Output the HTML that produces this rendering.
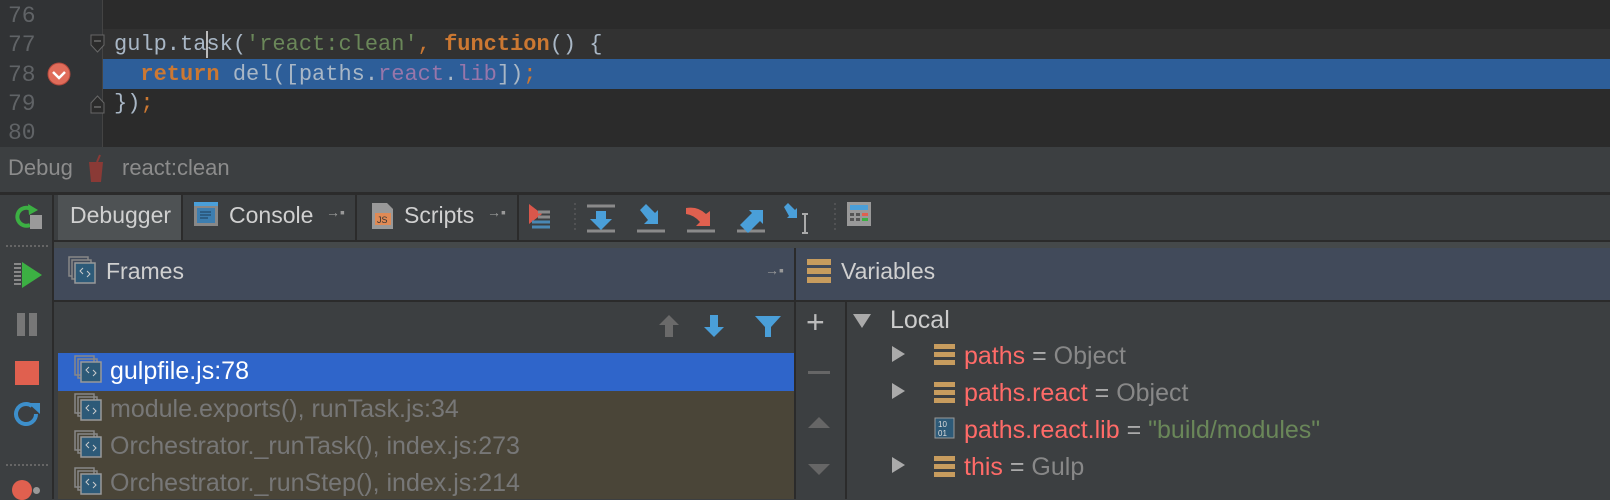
<!DOCTYPE html>
<html><head><meta charset="utf-8"><style>
*{margin:0;padding:0;box-sizing:border-box}
body{width:1610px;height:499px;overflow:hidden;background:#3c3f41;font-family:"Liberation Sans",sans-serif;position:relative}
.a{position:absolute}
.mono{font-family:"Liberation Mono",monospace;font-size:22px;white-space:pre}
.ln{color:#606366;left:8px;font-size:23px}
.ui{font-size:22px;white-space:pre}
.l{font-size:25px;white-space:pre}
</style></head><body>
<!-- editor -->
<div class="a" style="left:0;top:0;width:1610px;height:147px;background:#2b2b2b"></div>
<div class="a" style="left:0;top:29px;width:1610px;height:30px;background:#323232"></div>
<div class="a" style="left:102px;top:0;width:1px;height:147px;background:#444"></div>
<div class="a" style="left:103px;top:59px;width:1507px;height:30px;background:#2d5e99"></div>
<div class="a" style="left:0;top:0;width:102px;height:147px;background:#313335"></div>
<div class="a mono ln" style="top:3px">76</div>
<div class="a mono ln" style="top:32px">77</div>
<div class="a mono ln" style="top:62px">78</div>
<div class="a mono ln" style="top:91px">79</div>
<div class="a mono ln" style="top:120px">80</div>
<svg class="a" style="left:45px;top:60px" width="28" height="28"><circle cx="14" cy="14" r="11" fill="#e06c5a" stroke="#b4493d"/><path d="M8 12l6 6 6-6" stroke="#fff" stroke-width="2.5" fill="none"/></svg>
<svg class="a" style="left:90px;top:34px" width="16" height="22"><path d="M1 1h13v10l-6.5 7L1 11z" fill="#2b2b2b" stroke="#666"/><path d="M4 7h7" stroke="#888"/></svg>
<svg class="a" style="left:90px;top:92px" width="16" height="22"><path d="M1 21h13V11L7.5 4 1 11z" fill="#2b2b2b" stroke="#666"/><path d="M4 15h7" stroke="#888"/></svg>
<div class="a mono" style="left:114px;top:32px;color:#a9b7c6">gulp.task(<span style="color:#6a8759">'react:clean'</span><span style="color:#cc7832">, </span><b style="color:#cc7832">function</b>() {</div>
<div class="a" style="left:206px;top:31px;width:2px;height:27px;background:#bbb"></div>
<div class="a mono" style="left:114px;top:62px;color:#a9b7c6">  <b style="color:#cc7832">return</b> del([paths.<span style="color:#9876aa">react</span>.<span style="color:#9876aa">lib</span>])<span style="color:#cc7832">;</span></div>
<div class="a mono" style="left:114px;top:91px;color:#a9b7c6">})<span style="color:#cc7832">;</span></div>
<!-- debug bar -->
<div class="a" style="left:0;top:147px;width:1610px;height:46px;background:#3c3f41"></div>
<div class="a ui" style="left:8px;top:155px;color:#8c8c8c">Debug</div>
<svg class="a" style="left:84px;top:154px" width="24" height="30"><path d="M5 8h14l-2 20H7z" fill="#8a3a36"/><path d="M13 8l3-7" stroke="#8a3a36" stroke-width="2"/></svg>
<div class="a ui" style="left:122px;top:155px;color:#8c8c8c">react:clean</div>
<div class="a" style="left:0;top:192px;width:1610px;height:3px;background:#2b2b2b"></div>
<!-- left sidebar -->
<div class="a" style="left:52px;top:195px;width:2px;height:304px;background:#2b2b2b"></div>
<svg class="a" style="left:10px;top:200px" width="34" height="32"><path d="M24 12A9 9 0 1 0 20 25" stroke="#3cb043" stroke-width="4" fill="none"/><path d="M18 4l10 6-9 5z" fill="#3cb043"/><rect x="20" y="15" width="12" height="14" fill="#9a9a9a"/></svg>
<div class="a" style="left:6px;top:245px;width:42px;border-top:2px dotted #666"></div>
<svg class="a" style="left:12px;top:260px" width="32" height="30"><path d="M10 2v26l20-13z" fill="#3cb043"/><path d="M2 4h7M2 8h7M2 12h7M2 16h7M2 20h7M2 24h7" stroke="#888" stroke-width="2"/></svg>
<div class="a" style="left:17px;top:313px;width:8px;height:23px;background:#777"></div>
<div class="a" style="left:29px;top:313px;width:8px;height:23px;background:#777"></div>
<div class="a" style="left:15px;top:361px;width:24px;height:24px;background:#e0604f"></div>
<svg class="a" style="left:12px;top:398px" width="32" height="34"><path d="M24 16A10 10 0 1 1 20 8" stroke="#3d8fcb" stroke-width="4" fill="none"/><path d="M16 5h12v11z" fill="#3d8fcb"/></svg>
<div class="a" style="left:6px;top:464px;width:42px;border-top:2px dotted #666"></div>
<div class="a" style="left:12px;top:480px;width:20px;height:20px;border-radius:50%;background:#e0604f"></div>
<div class="a" style="left:33px;top:487px;width:7px;height:7px;border-radius:50%;background:#999"></div>
<!-- tabs -->
<div class="a" style="left:54px;top:195px;width:1556px;height:45px;background:#3c3f41"></div>
<div class="a" style="left:58px;top:195px;width:123px;height:45px;background:#4e5254"></div>
<div class="a" style="left:181px;top:195px;width:2px;height:45px;background:#2b2b2b"></div>
<div class="a" style="left:355px;top:195px;width:2px;height:45px;background:#2b2b2b"></div>
<div class="a" style="left:517px;top:195px;width:2px;height:45px;background:#2b2b2b"></div>
<div class="a ui" style="left:70px;top:202px;color:#d0d0d0;font-size:23px">Debugger</div>
<svg class="a" style="left:193px;top:201px" width="26" height="26"><rect x="1" y="1" width="24" height="24" fill="#888"/><rect x="1" y="1" width="24" height="4" fill="#4a9fd9"/><rect x="4" y="7" width="18" height="15" fill="#3d7eb0"/><path d="M7 11h11M7 14h11M7 17h8" stroke="#1d3c57"/></svg>
<div class="a ui" style="left:229px;top:202px;color:#d0d0d0;font-size:23px">Console</div>
<div class="a" style="left:326px;top:204px;color:#999;font-size:14px">→▪</div>
<svg class="a" style="left:371px;top:202px" width="24" height="28"><path d="M1 1h15l6 6v20H1z" fill="#999"/><rect x="4" y="11" width="16" height="12" fill="#e08a55"/><text x="6" y="21" font-size="9" fill="#333" font-family="Liberation Sans">JS</text></svg>
<div class="a ui" style="left:404px;top:202px;color:#d0d0d0;font-size:23px">Scripts</div>
<div class="a" style="left:487px;top:204px;color:#999;font-size:14px">→▪</div>
<svg class="a" style="left:526px;top:200px" width="360" height="34"><path d="M3 4v20l13-10z" fill="#d9574b"/><path d="M12 12h12M12 17h12M6 22h18M6 27h18" stroke="#8a8a8a" stroke-width="3"/><path d="M6 22h18M6 27h18" stroke="#4a88b4" stroke-width="3"/>
<path d="M49 3v30M309 3v30" stroke="#666" stroke-dasharray="2 3"/>
<path d="M61 6h28M61 31h28" stroke="#8a8a8a" stroke-width="3"/><path d="M70 11h10v8h6l-11 11-11-11h6z" fill="#4a9fd9"/>
<path d="M111 31h28" stroke="#8a8a8a" stroke-width="3"/><path d="M114 10l6-6 9 9 3-3v14h-14l4-4z" fill="#4a9fd9"/>
<path d="M161 31h28" stroke="#8a8a8a" stroke-width="3"/><path d="M160 8q12-2 20 6l4-3v15h-14l4-4q-6-7-14-8z" fill="#e0604f"/>
<path d="M211 31h28" stroke="#8a8a8a" stroke-width="3"/><path d="M214 25l12-12-3-3h14v14l-3-3-12 12z" fill="#4a9fd9"/>
<path d="M258 7l4-4 7 7 2-2v10h-10l2-2z" fill="#4a9fd9"/><path d="M276 14h6M279 14v19M276 33h6" stroke="#aaa" stroke-width="2"/>
</svg>
<svg class="a" style="left:846px;top:201px" width="26" height="26"><rect x="1" y="1" width="24" height="24" fill="#999"/><rect x="4" y="4" width="18" height="5" fill="#4a9fd9"/><rect x="4" y="12" width="4" height="3" fill="#555"/><rect x="10" y="12" width="4" height="3" fill="#555"/><rect x="16" y="12" width="6" height="3" fill="#e0604f"/><rect x="4" y="17" width="4" height="3" fill="#555"/><rect x="10" y="17" width="4" height="3" fill="#555"/><rect x="16" y="17" width="6" height="3" fill="#3cb043"/></svg>
<div class="a" style="left:54px;top:240px;width:1556px;height:8px;background:#45494a;border-top:2px solid #2b2b2b"></div>
<!-- headers -->
<div class="a" style="left:54px;top:248px;width:1556px;height:52px;background:#414a5a"></div>
<div class="a" style="left:794px;top:248px;width:2px;height:251px;background:#2b2b2b"></div>
<div class="a" style="left:54px;top:300px;width:1556px;height:2px;background:#2b2b2b"></div>
<svg class="a" style="left:68px;top:256px" width="30" height="30"><rect x="1" y="1" width="19" height="19" fill="none" stroke="#888" stroke-width="1.5"/><rect x="4" y="4" width="19" height="19" fill="#414a5a" stroke="#888" stroke-width="1.5"/><rect x="7" y="7" width="20" height="20" fill="#2d5a78" stroke="#999" stroke-width="1.5"/><path d="M15 12l-3 3 3 3M19 15l3 3-3 3" stroke="#ccc" fill="none"/></svg>
<div class="a ui" style="left:106px;top:258px;color:#d0d0d0;font-size:23px">Frames</div>
<div class="a" style="left:765px;top:262px;color:#999;font-size:14px">→▪</div>
<svg class="a" style="left:806px;top:258px" width="26" height="26"><rect x="1" y="1" width="24" height="6" fill="#c79c5e"/><rect x="1" y="10" width="24" height="6" fill="#c79c5e"/><rect x="1" y="19" width="24" height="6" fill="#c79c5e"/></svg>
<div class="a ui" style="left:841px;top:258px;color:#d0d0d0;font-size:23px">Variables</div>
<!-- frames -->
<svg class="a" style="left:655px;top:313px" width="130" height="28"><path d="M4 12l10-10 10 10h-6v12h-8V12z" fill="#6a6a6a"/><path d="M55 2h8v12h6L59 24 49 14h6z" fill="#4a9fd9"/><path d="M100 3h26l-10 11v10h-6V14z" fill="#4a9fd9"/></svg>
<div class="a" style="left:58px;top:353px;width:736px;height:38px;background:#2f65ca"></div>
<div class="a" style="left:58px;top:391px;width:736px;height:108px;background:#4a4538"></div>
<div class="a l" style="left:110px;top:357px;color:#fff">gulpfile.js:78</div>
<div class="a l" style="left:110px;top:395px;color:#777">module.exports(), runTask.js:34</div>
<div class="a l" style="left:110px;top:432px;color:#777">Orchestrator._runTask(), index.js:273</div>
<div class="a l" style="left:110px;top:469px;color:#777">Orchestrator._runStep(), index.js:214</div>
<svg class="a" style="left:74px;top:355px" width="30" height="144"><g id="fi"><rect x="1" y="1" width="19" height="19" fill="none" stroke="#888" stroke-width="1.5"/><rect x="4" y="4" width="19" height="19" fill="none" stroke="#888" stroke-width="1.5"/><rect x="7" y="7" width="20" height="20" fill="#2d5a78" stroke="#999" stroke-width="1.5"/><path d="M15 12l-3 3 3 3M19 15l3 3-3 3" stroke="#ccc" fill="none"/></g><use href="#fi" y="38"/><use href="#fi" y="75"/><use href="#fi" y="112"/></svg>
<!-- variables -->
<div class="a" style="left:845px;top:302px;width:2px;height:197px;background:#2b2b2b"></div>
<div class="a" style="left:806px;top:304px;color:#bbb;font-size:32px">+</div>
<div class="a" style="left:808px;top:371px;width:22px;height:3px;background:#666"></div>
<svg class="a" style="left:806px;top:412px" width="26" height="70"><path d="M2 16l11-11 11 11z" fill="#666"/><path d="M2 52l11 11 11-11z" fill="#666"/></svg>
<svg class="a" style="left:852px;top:312px" width="20" height="18"><path d="M1 2h18L10 16z" fill="#aaa"/></svg>
<div class="a l" style="left:890px;top:306px;color:#ccc">Local</div>
<svg class="a" style="left:890px;top:345px" width="16" height="130"><path d="M2 1l13 8-13 8z" fill="#aaa"/><path d="M2 38l13 8-13 8z" fill="#aaa"/><path d="M2 112l13 8-13 8z" fill="#aaa"/></svg>
<svg class="a" style="left:934px;top:344px" width="24" height="140"><g fill="#c79c5e"><rect x="0" y="0" width="21" height="5"/><rect x="0" y="8" width="21" height="5"/><rect x="0" y="16" width="21" height="5"/><rect x="0" y="38" width="21" height="5"/><rect x="0" y="46" width="21" height="5"/><rect x="0" y="54" width="21" height="5"/><rect x="0" y="112" width="21" height="5"/><rect x="0" y="120" width="21" height="5"/><rect x="0" y="128" width="21" height="5"/></g><rect x="1" y="74" width="19" height="20" fill="#2d5a78" stroke="#999"/><text x="4" y="83" font-size="8" fill="#ddd" font-family="Liberation Sans">10</text><text x="4" y="92" font-size="8" fill="#ddd" font-family="Liberation Sans">01</text></svg>
<div class="a l" style="left:964px;top:342px;color:#ff6b68">paths <span style="color:#aaa">=</span> <span style="color:#888">Object</span></div>
<div class="a l" style="left:964px;top:379px;color:#ff6b68">paths.react <span style="color:#aaa">=</span> <span style="color:#888">Object</span></div>
<div class="a l" style="left:964px;top:416px;color:#ff6b68">paths.react.lib <span style="color:#aaa">=</span> <span style="color:#6a8759">"build/modules"</span></div>
<div class="a l" style="left:964px;top:453px;color:#ff6b68">this <span style="color:#aaa">=</span> <span style="color:#888">Gulp</span></div>
</body></html>
